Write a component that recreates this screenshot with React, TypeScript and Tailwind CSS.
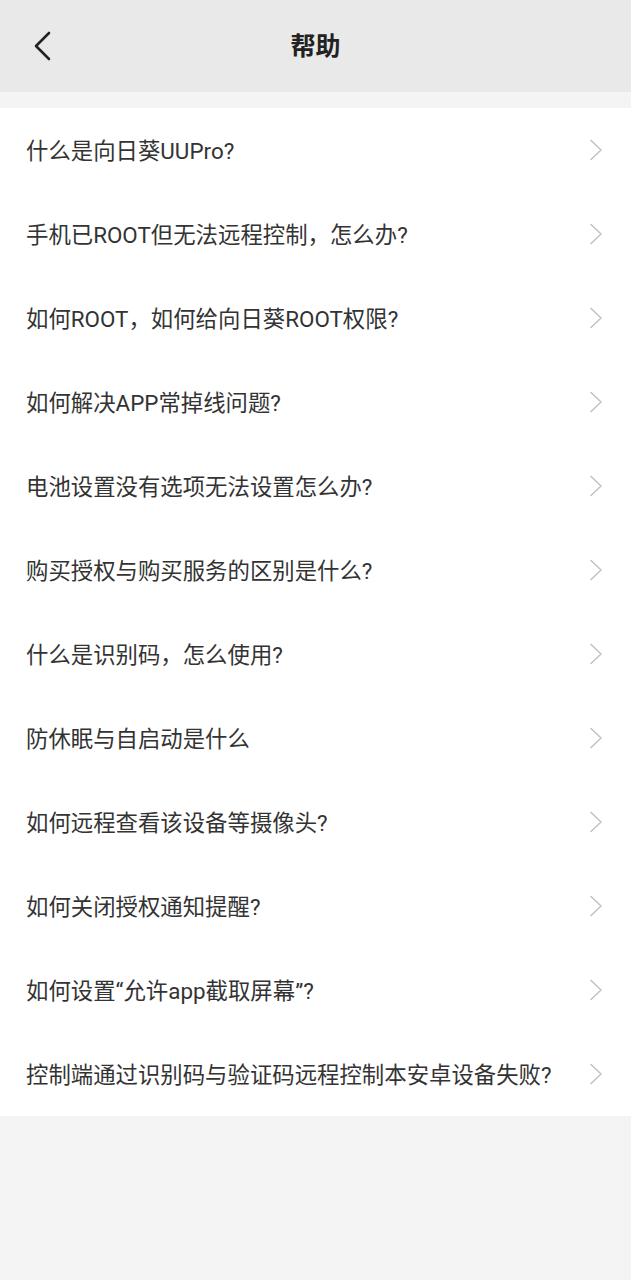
import React from 'react';

const questions = [
  '什么是向日葵UUPro?',
  '手机已ROOT但无法远程控制，怎么办?',
  '如何ROOT，如何给向日葵ROOT权限?',
  '如何解决APP常掉线问题?',
  '电池设置没有选项无法设置怎么办?',
  '购买授权与购买服务的区别是什么?',
  '什么是识别码，怎么使用?',
  '防休眠与自启动是什么',
  '如何远程查看该设备等摄像头?',
  '如何关闭授权通知提醒?',
  '如何设置“允许app截取屏幕”?',
  '控制端通过识别码与验证码远程控制本安卓设备失败?',
];

const Chevron = () => (
  <svg width="14" height="22" viewBox="0 0 14 22" fill="none" className="shrink-0">
    <path d="M2 1.5 L12 11 L2 20.5" stroke="#c4c4c4" strokeWidth="1.6" strokeLinecap="round" strokeLinejoin="round" />
  </svg>
);

const App: React.FC = () => {
  return (
    <div
      className="min-h-[1280px] w-full bg-[#f4f4f4] flex flex-col"
      style={{ fontFamily: 'Roboto, "Noto Sans CJK SC", sans-serif' }}
    >
      <header className="h-[92px] bg-[#e9e9e9] flex items-center relative">
        <button className="absolute left-[32px] top-[31px] p-0">
          <svg width="20" height="30" viewBox="0 0 20 30" fill="none">
            <path d="M17 2 L4 15 L17 28" stroke="#222" strokeWidth="2.6" strokeLinecap="round" strokeLinejoin="round" />
          </svg>
        </button>
        <h1 className="flex-1 text-center text-[25px] font-bold text-[#222] leading-none">帮助</h1>
      </header>

      <div className="h-[16px]" />

      <ul className="bg-white flex flex-col">
        {questions.map((q) => (
          <li key={q} className="h-[84px] flex items-center justify-between pl-[26px] pr-[28px]">
            <span className="text-[22.4px] text-[#333] leading-none pt-[2px]">{q}</span>
            <Chevron />
          </li>
        ))}
      </ul>
    </div>
  );
};

export default App;
